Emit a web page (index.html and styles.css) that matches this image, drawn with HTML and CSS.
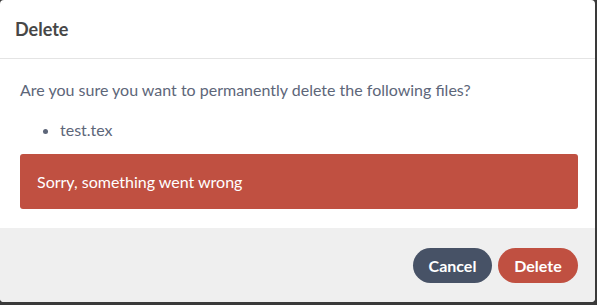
FILE: index.html
```html
<!DOCTYPE html>
<html lang="en">
<head>
    <meta charset="UTF-8">
    <title>Delete</title>
    <link rel="stylesheet" href="styles.css">
</head>
<body>

    <div class="modal">
        <div class="modal-header">
            <h3>Delete</h3>
        </div>
        <div class="modal-body">
            <p>Are you sure you want to permanently delete the following files?</p>
            <ul class="file-list">
                <li>test.tex</li>
            </ul>
            <div class="alert">Sorry, something went wrong</div>
        </div>
        <div class="modal-footer">
            <button class="btn btn-cancel">Cancel</button>
            <button class="btn btn-danger">Delete</button>
        </div>
    </div>

</body>
</html>
```

FILE: styles.css
```css
* {
    margin: 0;
    padding: 0;
    box-sizing: border-box;
    font-family: Lato, 'Liberation Sans', sans-serif;
}

body {
    background: #3a3a3a;
    width: 597px;
    height: 305px;
    overflow: hidden;
}

.modal {
    width: 595px;
    height: 302px;
    background: white;
    border-radius: 4px;
    overflow: hidden;
    display: flex;
    flex-direction: column;
}

.modal-header {
    height: 59px;
    padding: 0 15px;
    border-bottom: 1px solid #e4e4e4;
    display: flex;
    align-items: center;
}

.modal-header h3 {
    font-size: 18px;
    font-weight: bold;
    color: #474747;
}

.modal-body {
    padding: 20px 17px 19px 20px;
    color: #5d6679;
    font-size: 16px;
    line-height: 22px;
}

.file-list {
    margin: 18px 0 13px 0;
    padding-left: 40px;
}

.file-list li {
    line-height: 22px;
}

.alert {
    background: #c05041;
    color: white;
    border-radius: 3px;
    padding: 16px 17px;
    line-height: 23px;
}

.modal-footer {
    flex: 1;
    background: #efefef;
    padding: 20px 17px 0 0;
    display: flex;
    justify-content: flex-end;
    align-items: flex-start;
    gap: 6px;
}

.btn {
    height: 35px;
    border: none;
    border-radius: 18px;
    color: white;
    font-size: 16px;
    font-weight: bold;
    cursor: pointer;
}

.btn-cancel {
    width: 79px;
    background: #475266;
}

.btn-danger {
    width: 80px;
    background: #c05041;
}
```
